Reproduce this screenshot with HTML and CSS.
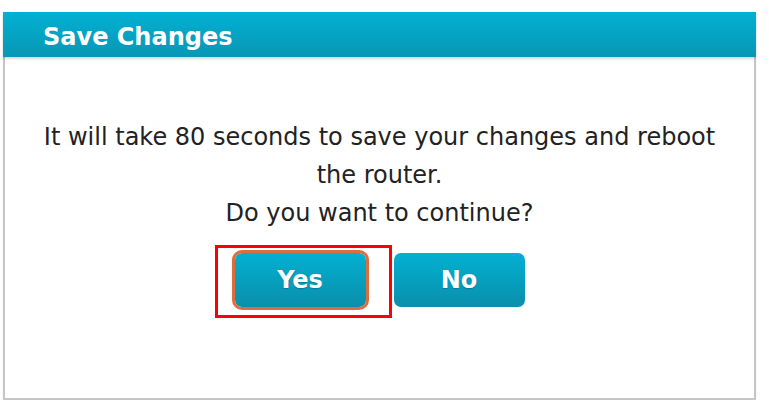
FILE: index.html
```html
<!DOCTYPE html>
<html lang="en">
<head>
  <meta charset="UTF-8" />
  <title>Save Changes</title>
  <link rel="stylesheet" href="styles.css">
</head>
<body>
  <div class="dialog">
    <div class="dialog-head">Save Changes</div>
    <div class="dialog-body">
      <p class="msg">It will take 80 seconds to save your changes and reboot<br>the router.<br>Do you want to continue?</p>
      <div class="buttons">
        <div class="pick">
          <button class="btn yes">Yes</button>
          <span class="mark"></span>
        </div>
        <button class="btn no">No</button>
      </div>
    </div>
  </div>
</body>
</html>
```

FILE: styles.css
```css
* {
  box-sizing: border-box;
  margin: 0;
  padding: 0;
}

html, body {
  background: #fff;
  font-family: "DejaVu Sans", Verdana, sans-serif;
  color: #222;
}

.dialog {
  width: 753px;
  height: 388px;
  margin: 12px 0 0 3px;
  display: flex;
  flex-direction: column;
  box-shadow: 0 2px 2px rgba(0,0,0,0.08);
}

.dialog-head {
  height: 45px;
  padding: 4px 0 0 40px;
  display: flex;
  align-items: center;
  font-size: 24px;
  font-weight: bold;
  color: #fff;
  background: linear-gradient(#02b0d3, #0897b4);
  box-shadow: 0 2px 2px rgba(0,0,0,0.15);
  position: relative;
  z-index: 1;
}

.dialog-body {
  flex: 1;
  border: 2px solid #c6c6c6;
  border-top: none;
  display: flex;
  flex-direction: column;
  align-items: center;
  padding-top: 61px;
}

.msg {
  text-align: center;
  font-size: 24px;
  line-height: 38px;
}

.buttons {
  display: flex;
  gap: 28px;
  margin-top: 21px;
}

.pick {
  position: relative;
}

.btn {
  width: 131px;
  height: 54px;
  border: none;
  border-radius: 7px;
  background: linear-gradient(#03b0d2, #0a8fab);
  color: #fff;
  font-family: "DejaVu Sans", Verdana, sans-serif;
  font-size: 24px;
  font-weight: bold;
  text-shadow: 0 1px 1px rgba(0,0,0,0.2);
  cursor: pointer;
}

.btn.yes {
  outline: 3px solid #dc6d3c;
  outline-offset: 0;
}

.mark {
  position: absolute;
  left: -20px;
  top: -8px;
  width: 177px;
  height: 73px;
  border: 3px solid #f00;
}
```
